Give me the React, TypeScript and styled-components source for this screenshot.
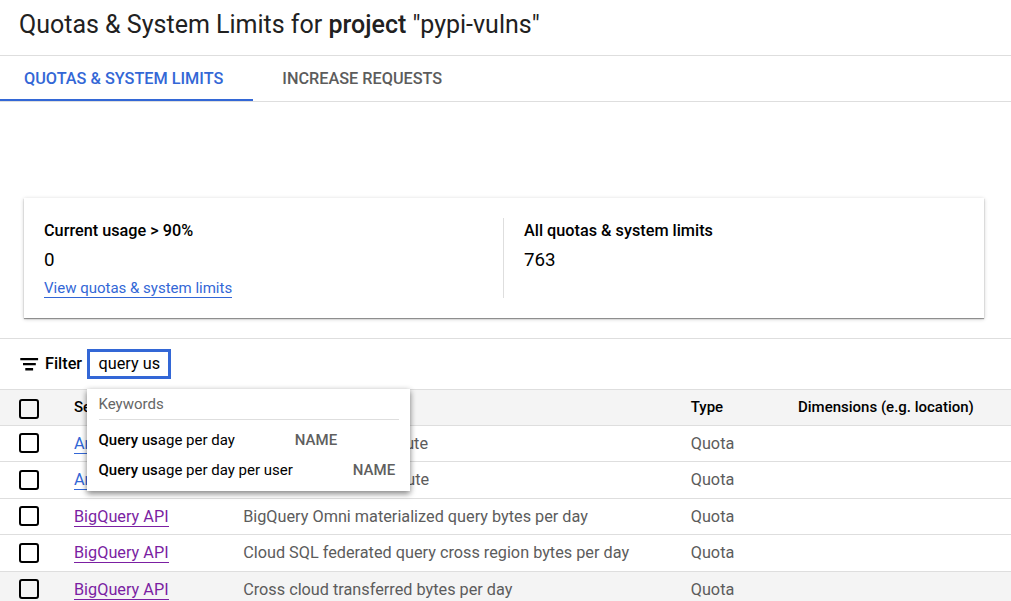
import React from 'react';
import styled, { createGlobalStyle } from 'styled-components';

const GlobalStyle = createGlobalStyle`
  * { box-sizing: border-box; }
  body {
    margin: 0;
    background: #fff;
    color: #000;
    font-family: Roboto, sans-serif;
    font-size: 16.25px;
    overflow: hidden;
  }
`;

const Page = styled.main`
  width: 1011px;
  height: 601px;
  overflow: hidden;
`;

const Title = styled.h1`
  margin: 0;
  height: 56px;
  padding: 10px 19px 0;
  border-bottom: 1px solid #dedede;
  color: #212121;
  font-size: 25px;
  font-weight: 400;
  line-height: 30px;
  white-space: nowrap;

  b { font-weight: 500; }
`;

const Tabs = styled.nav`
  display: flex;
  height: 46px;
  border-bottom: 1px solid #dedede;
`;

const Tab = styled.a<{ $active?: boolean }>`
  height: 45px;
  padding: 0 29.5px 0 ${p => (p.$active ? 24 : 29.5)}px;
  border-bottom: 2px solid ${p => (p.$active ? '#3367d6' : 'transparent')};
  color: ${p => (p.$active ? '#3367d6' : '#5c5c5c')};
  font-weight: 500;
  line-height: 45px;
  white-space: nowrap;
`;

const SummaryCard = styled.section`
  display: flex;
  width: 960px;
  height: 120px;
  margin: 96px 0 20px 24px;
  padding: 20px 0;
  background: #fff;
  box-shadow: 0 1px 1px rgba(0, 0, 0, 0.36), 0 1px 4px rgba(0, 0, 0, 0.22);
`;

const Metric = styled.div`
  width: 480px;
  height: 80px;
  padding-left: 20px;

  & + & { border-left: 1px solid #dedede; margin-left: -1px; }
`;

const MetricLabel = styled.h2`
  margin: 0;
  font-size: 16.25px;
  font-weight: 500;
  line-height: 25px;
`;

const MetricValue = styled.div`
  margin-top: 7px;
  font-size: 18.75px;
  line-height: 20px;
`;

const Link = styled.a<{ $visited?: boolean }>`
  display: block;
  width: max-content;
  height: 20px;
  border-bottom: 1px solid ${p => (p.$visited ? '#7b1fa2' : '#3367d6')};
  color: ${p => (p.$visited ? '#7b1fa2' : '#3367d6')};
  line-height: 19px;
  white-space: nowrap;
`;

const MetricLink = styled(Link)`
  margin-top: 8px;
  font-size: 15px;
  line-height: 21px;
`;

const FilterBar = styled.div`
  position: relative;
  display: flex;
  align-items: center;
  height: 51px;
  padding-left: 20px;
  border-top: 1px solid #dedede;
`;

const FilterLabel = styled.span`
  width: 42px;
  margin-left: 6px;
  font-weight: 500;
  line-height: 20px;
`;

const QueryBox = styled.div`
  width: 84px;
  height: 30px;
  border: 3px solid #3367d6;
  padding-left: 8.5px;
  line-height: 23px;
  white-space: nowrap;
`;

const Suggestions = styled.div`
  position: absolute;
  z-index: 2;
  top: 50px;
  left: 87px;
  width: 323px;
  height: 102px;
  padding: 0 11px 0 11.5px;
  background: #fff;
  font-size: 15px;
  box-shadow: 0 3px 6px rgba(0, 0, 0, 0.38), 0 1px 6px rgba(0, 0, 0, 0.18);
`;

const SuggestionHeading = styled.div`
  height: 31px;
  margin-bottom: 5px;
  border-bottom: 1px solid #dedede;
  color: #666;
  line-height: 30px;
`;

const Suggestion = styled.div`
  display: flex;
  gap: 60px;
  height: 30px;
  line-height: 30px;
  white-space: nowrap;

  b { font-weight: 500; }
`;

const Category = styled.span`
  color: #5f5f5f;
  font-weight: 500;
`;

const Row = styled.div<{ $height: number; $shaded?: boolean }>`
  display: grid;
  grid-template-columns: 55px 169.15px 447.6px 107.25px 1fr;
  align-items: start;
  height: ${p => p.$height}px;
  padding-left: 19px;
  border-bottom: 1px solid #dedede;
  background: ${p => (p.$shaded ? '#f4f4f4' : '#fff')};
  color: #5c5c5c;
`;

const HeaderRow = styled(Row)`
  border-top: 1px solid #dedede;
  color: #000;
  font-size: 15px;
  font-weight: 500;
`;

const Checkbox = styled.span<{ $top: number }>`
  width: 20px;
  height: 20px;
  margin-top: ${p => p.$top}px;
  border: 2px solid #000;
  border-radius: 3px;
`;

const Cell = styled.span`
  line-height: 35px;
  white-space: nowrap;
`;

const LinkCell = styled.span`
  padding-top: 8px;
`;

const rows = [
  { height: 36, box: 7, service: 'Analytics Hub API', name: 'Read requests per minute' },
  { height: 37, box: 8, service: 'Analytics Hub API', name: 'Write requests per minute' },
  { height: 36, box: 7, service: 'BigQuery API', visited: true, name: 'BigQuery Omni materialized query bytes per day' },
  { height: 37, box: 8, service: 'BigQuery API', visited: true, name: 'Cloud SQL federated query cross region bytes per day' },
  { height: 37, box: 7, service: 'BigQuery API', visited: true, shaded: true, name: 'Cross cloud transferred bytes per day' },
];

const FilterIcon = () => (
  <svg width="19" height="16" viewBox="0 0 19 16" aria-hidden="true">
    <path d="M.3 2h17.8v2.2H.3zM3 7h12.8v2.2H3zM5.3 12h7.8v2.4H5.3z" fill="#000" />
  </svg>
);

export default function App() {
  return (
    <Page>
      <GlobalStyle />
      <Title>Quotas &amp; System Limits for <b>project</b> "pypi-vulns"</Title>
      <Tabs>
        <Tab $active>QUOTAS &amp; SYSTEM LIMITS</Tab>
        <Tab>INCREASE REQUESTS</Tab>
      </Tabs>
      <SummaryCard>
        <Metric>
          <MetricLabel>Current usage &gt; 90%</MetricLabel>
          <MetricValue>0</MetricValue>
          <MetricLink>View quotas &amp; system limits</MetricLink>
        </Metric>
        <Metric>
          <MetricLabel>All quotas &amp; system limits</MetricLabel>
          <MetricValue>763</MetricValue>
        </Metric>
      </SummaryCard>
      <FilterBar>
        <FilterIcon />
        <FilterLabel>Filter</FilterLabel>
        <QueryBox>query us</QueryBox>
        <Suggestions>
          <SuggestionHeading>Keywords</SuggestionHeading>
          <Suggestion>
            <span><b>Query us</b>age per day</span>
            <Category>NAME</Category>
          </Suggestion>
          <Suggestion>
            <span><b>Query us</b>age per day per user</span>
            <Category>NAME</Category>
          </Suggestion>
        </Suggestions>
      </FilterBar>
      <HeaderRow $height={37} $shaded>
        <Checkbox $top={9} />
        <Cell>Service</Cell>
        <Cell>Name</Cell>
        <Cell>Type</Cell>
        <Cell>Dimensions (e.g. location)</Cell>
      </HeaderRow>
      {rows.map((row, i) => (
        <Row key={i} $height={row.height} $shaded={row.shaded}>
          <Checkbox $top={row.box} />
          <LinkCell><Link $visited={row.visited}>{row.service}</Link></LinkCell>
          <Cell>{row.name}</Cell>
          <Cell>Quota</Cell>
        </Row>
      ))}
    </Page>
  );
}
